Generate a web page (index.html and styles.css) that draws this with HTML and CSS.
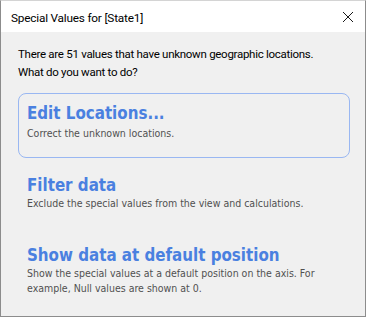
FILE: index.html
```html
<!DOCTYPE html>
<html lang="en">
<head>
    <meta charset="UTF-8">
    <title>Special Values for [State1]</title>
    <link rel="stylesheet" href="styles.css">
</head>
<body>
    <div class="dialog">
        <div class="titlebar">
            <span class="title">Special Values for [State1]</span>
            <svg class="close" width="12" height="12" viewBox="0 0 12 12">
                <path d="M1 1 L11 11 M11 1 L1 11" stroke="#1a1a1a" stroke-width="1" fill="none"/>
            </svg>
        </div>
        <div class="content">
            <p class="intro">There are 51 values that have unknown geographic locations.<br>What do you want to do?</p>
            <div class="option active">
                <div class="option-title">Edit Locations...</div>
                <div class="option-desc">Correct the unknown locations.</div>
            </div>
            <div class="option">
                <div class="option-title">Filter data</div>
                <div class="option-desc">Exclude the special values from the view and calculations.</div>
            </div>
            <div class="option">
                <div class="option-title">Show data at default position</div>
                <div class="option-desc">Show the special values at a default position on the axis. For example, Null values are shown at 0.</div>
            </div>
        </div>
    </div>
</body>
</html>
```

FILE: styles.css
```css
body {
    margin: 0;
    background: #ffffff;
    font-family: Roboto, "Noto Sans", sans-serif;
}

.dialog {
    width: 364px;
    height: 315px;
    border: 1px solid #8c8c8c;
    border-top-color: #d4d4d4;
    background: #f0f0f0;
    display: flex;
    flex-direction: column;
    overflow: hidden;
}

.titlebar {
    flex: none;
    height: 31px;
    background: #ffffff;
    display: flex;
    align-items: center;
    justify-content: space-between;
    padding: 0 11px 0 10px;
}

.title {
    font-size: 11.8px;
    letter-spacing: -0.2px;
    color: #000000;
    padding-top: 2px;
}

.close {
    display: block;
    margin-top: 1px;
}

.content {
    padding: 13px 15px 0 17px;
}

.intro {
    margin: 0 0 12px;
    font-size: 11.5px;
    letter-spacing: -0.28px;
    line-height: 18px;
    color: #000000;
    white-space: nowrap;
}

.option {
    border: 1px solid transparent;
    border-radius: 8px;
    padding: 8px 8px 16px 8px;
    margin-bottom: 7px;
}

.option.active {
    border-color: #99b7f2;
}

.option-title {
    font-family: "DejaVu Sans Condensed", "DejaVu Sans", sans-serif;
    font-weight: bold;
    font-size: 16.8px;
    line-height: 22px;
    color: #4a80e0;
}

.option-desc {
    font-family: "DejaVu Sans Condensed", "DejaVu Sans", sans-serif;
    font-size: 10.5px;
    line-height: 15px;
    color: #505050;
}

.option.active .option-desc {
    margin-top: 2px;
}
```
